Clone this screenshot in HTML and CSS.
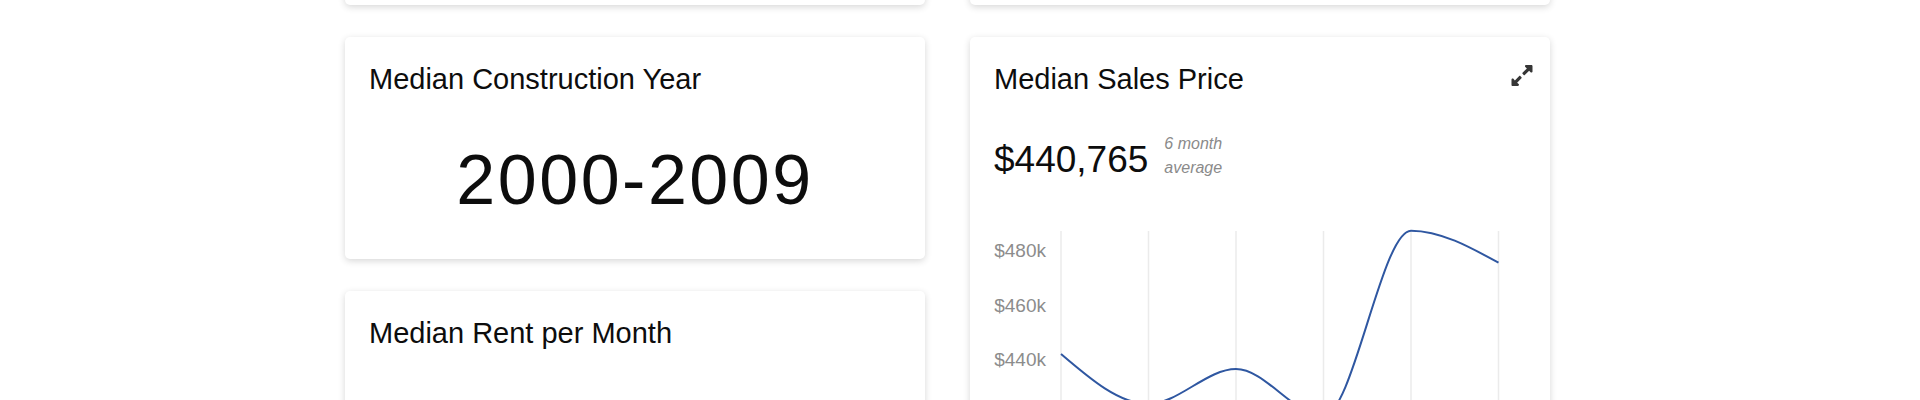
FILE: index.html
```html
<!DOCTYPE html>
<html>
<head>
	<meta charset="utf-8">
	<meta name="viewport" content="width=device-width">
	<title>Market Overview</title>
	<link rel="stylesheet" href="styles.css">
</head>
<body>
	<div class="page">
		<div class="column">
			<div class="card stub"></div>
			<div class="card">
				<div class="card-title">Median Construction Year</div>
				<div class="big-value">2000-2009</div>
			</div>
			<div class="card tall">
				<div class="card-title">Median Rent per Month</div>
			</div>
		</div>
		<div class="column">
			<div class="card stub"></div>
			<div class="card">
				<div class="card-head">
					<div class="card-title">Median Sales Price</div>
					<button class="expand" title="Expand">
						<svg width="22" height="21" viewBox="0 32 448 448">
							<path d="M212.686 315.314L120 408l32.922 31.029c15.12 15.12 4.412 40.971-16.97 40.971h-112C10.697 480 0 469.255 0 456V344c0-21.382 25.803-32.09 40.922-16.971L72 360l92.686-92.686c6.248-6.248 16.379-6.248 22.627 0l25.373 25.373c6.249 6.248 6.249 16.378 0 22.627zm22.628-118.628L328 104l-32.922-31.029C279.958 57.851 290.666 32 312.048 32h112C437.303 32 448 42.745 448 56v112c0 21.382-25.803 32.09-40.922 16.971L376 152l-92.686 92.686c-6.248 6.248-16.379 6.248-22.627 0l-25.373-25.373c-6.249-6.248-6.249-16.378 0-22.627z"/>
						</svg>
					</button>
				</div>
				<div class="price-row">
					<span class="price">$440,765</span>
					<span class="price-note">6 month<br>average</span>
				</div>
				<svg class="chart" width="532" height="260" viewBox="0 0 532 260">
					<g class="grid">
						<line x1="67" y1="11" x2="67" y2="260" />
						<line x1="154.5" y1="11" x2="154.5" y2="260" />
						<line x1="242" y1="11" x2="242" y2="260" />
						<line x1="329.5" y1="11" x2="329.5" y2="260" />
						<line x1="417" y1="11" x2="417" y2="260" />
						<line x1="504.5" y1="11" x2="504.5" y2="260" />
					</g>
					<g class="axis">
						<text x="52" y="36.7">$480k</text>
						<text x="52" y="91.7">$460k</text>
						<text x="52" y="146">$440k</text>
					</g>
					<path class="line" d="M67 134 C96.17 159 125.33 184 154.5 184 C183.67 184 212.83 149 242 149 C271.17 149 300.33 196 329.5 196 C358.67 196 387.83 10.7 417 10.7 C446.17 10.7 475.33 26.7 504.5 42.7" />
				</svg>
			</div>
		</div>
	</div>
</body>
</html>
```

FILE: styles.css
```css
* {
	box-sizing: border-box;
	font-family: "Liberation Sans", Arial, sans-serif;
}

body {
	background: #fff;
	color: #0d0d0d;
	margin: 0;
	overflow: hidden;
}

.page {
	column-gap: 45px;
	display: grid;
	grid-template-columns: 1fr 1fr;
	margin: -115px auto 0;
	max-width: 1230px;
	padding-right: 25px;
}

.column {
	display: flex;
	flex-direction: column;
	gap: 32px;
}

.card {
	background: #fff;
	border-radius: 5px;
	box-shadow: 0 2px 7px rgba(0, 0, 0, 0.16);
	padding: 24px;
}
.card.stub {
	height: 120px;
}
.card.tall {
	height: 240px;
}

.card-title {
	font-size: 29px;
	line-height: 36px;
}

.card-head {
	align-items: flex-start;
	display: flex;
	justify-content: space-between;
}

.expand {
	background: none;
	border: 0;
	cursor: pointer;
	line-height: 0;
	margin: 4px -7px 0 0;
	padding: 0;
}
.expand svg {
	fill: #363636;
}

.big-value {
	font-size: 70px;
	letter-spacing: 2.5px;
	line-height: 70px;
	margin: 48px 0 20px;
	text-align: center;
}

.price-row {
	align-items: flex-end;
	display: flex;
	gap: 16px;
	margin-top: 35px;
}
.price {
	font-size: 37px;
	line-height: 40px;
}
.price-note {
	color: #8a8a8a;
	font-size: 16px;
	font-style: italic;
	line-height: 24px;
}

.chart {
	display: block;
	margin-top: 40px;
}
.chart .grid line {
	stroke: #ebebeb;
	stroke-width: 1.5;
}
.chart .axis text {
	fill: #8c8c8c;
	font-size: 19px;
	text-anchor: end;
}
.chart .line {
	fill: none;
	stroke: #2f57a1;
	stroke-width: 2;
}
```
